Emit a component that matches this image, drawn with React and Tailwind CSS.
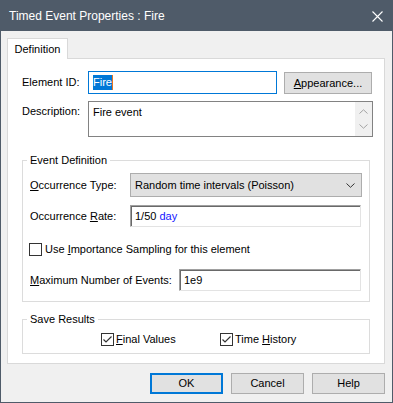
export default function App() {
  const sunken =
    "border border-[#e3e3e3] border-t-[#a0a0a0] border-l-[#a0a0a0] shadow-[inset_1px_1px_0_#696969] bg-white";
  return (
    <div className="w-[393px] h-[403px] flex flex-col border border-[#4f5b69] bg-[#f0f0f0] font-['Liberation_Sans',Arial,sans-serif] text-[11px] leading-[13px] text-black overflow-hidden">
      {/* Title bar */}
      <div className="h-[30px] shrink-0 bg-[#4f5b69] flex items-center justify-between pl-[8px] pr-[9px]">
        <span className="text-white text-[12px] leading-[14px]">Timed Event Properties : Fire</span>
        <svg width="11" height="11" viewBox="0 0 11 11" className="block">
          <path d="M0.5 0.5 L10.5 10.5 M10.5 0.5 L0.5 10.5" stroke="#ffffff" strokeWidth="1.1" fill="none" />
        </svg>
      </div>

      {/* Body */}
      <div className="flex-1 flex flex-col pt-[7px] pl-[6px]">
        {/* Tab */}
        <div className="relative z-10 -mb-px w-[61px] h-[21px] border border-b-0 border-[#d9d9d9] bg-white flex items-center justify-center">
          <span>Definition</span>
        </div>
        {/* Panel */}
        <div className="w-[378px] h-[306px] border border-[#d9d9d9] bg-white flex flex-col pt-[12px] pl-[14px]">
          {/* Element ID row */}
          <div className="flex items-start">
            <div className="w-[66px] h-[23px] flex items-center">Element ID:</div>
            <div className="w-[189px] h-[23px] border border-[#0078d7] bg-white flex items-center pl-[4px]">
              <span className="bg-[#0078d7] text-white leading-[15px]">Fire</span>
              <span className="w-px h-[15px] bg-[#e8741c]"></span>
            </div>
            <div className="ml-[7px] mt-px w-[88px] h-[22px] border border-[#adadad] bg-[#e1e1e1] flex items-center justify-center">
              <span>
                <span className="underline">A</span>ppearance...
              </span>
            </div>
          </div>
          {/* Description row */}
          <div className="flex items-start mt-[7px]">
            <div className="w-[66px] pt-[4px]">Description:</div>
            <div className="w-[285px] h-[36px] border border-[#828282] bg-white flex">
              <div className="flex-1 pl-[4px] pt-[4px]">Fire event</div>
              <div className="w-[17px] bg-[#f0f0f0] flex flex-col items-center justify-between py-[7px]">
                <svg width="9" height="5" viewBox="0 0 9 5" className="block">
                  <path d="M0.5 4.5 L4.5 0.8 L8.5 4.5" stroke="#a3a3a3" strokeWidth="1" fill="none" />
                </svg>
                <svg width="9" height="5" viewBox="0 0 9 5" className="block">
                  <path d="M0.5 0.5 L4.5 4.2 L8.5 0.5" stroke="#a3a3a3" strokeWidth="1" fill="none" />
                </svg>
              </div>
            </div>
          </div>

          {/* Event Definition group */}
          <fieldset className="mt-[17px] w-[348px] border border-[#dcdcdc]">
            <legend className="ml-[4px] px-[3px]">Event Definition</legend>
            <div className="pl-[7px] pt-[6px] pb-[10px]">
              <div className="flex items-center">
                <div className="w-[100px]">
                  <span className="underline">O</span>ccurrence Type:
                </div>
                <div className="w-[232px] h-[24px] border border-[#adadad] bg-[#e1e1e1] flex items-center justify-between pl-[4px] pr-[6px]">
                  <span>Random time intervals (Poisson)</span>
                  <svg width="9" height="5" viewBox="0 0 9 5" className="block">
                    <path d="M0.5 0.5 L4.5 4.3 L8.5 0.5" stroke="#333333" strokeWidth="1" fill="none" />
                  </svg>
                </div>
              </div>
              <div className="flex items-center mt-[8px]">
                <div className="w-[100px]">
                  Occurrence <span className="underline">R</span>ate:
                </div>
                <div className={`w-[231px] h-[22px] ${sunken} flex items-center pl-[4px]`}>
                  <span>1/50 </span>
                  <span className="text-[#1515ff] ml-[3px]">day</span>
                </div>
              </div>
              <div className="flex items-center mt-[16px] -ml-px">
                <div className="w-[13px] h-[13px] border border-[#333333] bg-white"></div>
                <span className="ml-[3px]">
                  Use <span className="underline">I</span>mportance Sampling for this element
                </span>
              </div>
              <div className="flex items-center mt-[13px]">
                <div className="w-[149px]">
                  <span className="underline">M</span>aximum Number of Events:
                </div>
                <div className={`w-[182px] h-[22px] ${sunken} flex items-center pl-[4px]`}>
                  <span>1e9</span>
                </div>
              </div>
            </div>
          </fieldset>

          {/* Save Results group */}
          <fieldset className="mt-[11px] w-[348px] border border-[#dcdcdc]">
            <legend className="ml-[4px] px-[3px]">Save Results</legend>
            <div className="flex items-center pl-[78px] pt-[7px] pb-[7px]">
              <div className="flex items-center w-[119px]">
                <Check />
                <span className="ml-[2px]">
                  <span className="underline">F</span>inal Values
                </span>
              </div>
              <div className="flex items-center">
                <Check />
                <span className="ml-[2px]">
                  Time <span className="underline">H</span>istory
                </span>
              </div>
            </div>
          </fieldset>
        </div>

        {/* Buttons */}
        <div className="w-[378px] flex justify-end gap-[8px] mt-[9px]">
          <div className="w-[73px] h-[21px] border-2 border-[#0078d7] bg-[#e1e1e1] flex items-center justify-center">OK</div>
          <div className="w-[73px] h-[21px] border border-[#adadad] bg-[#e1e1e1] flex items-center justify-center">Cancel</div>
          <div className="w-[73px] h-[21px] border border-[#adadad] bg-[#e1e1e1] flex items-center justify-center">Help</div>
        </div>
      </div>
    </div>
  );
}

function Check() {
  return (
    <div className="w-[13px] h-[13px] border border-[#333333] bg-white flex items-center justify-center">
      <svg width="11" height="11" viewBox="0 0 11 11" className="block">
        <path d="M1.5 5.5 L4 8 L9.5 2.5" stroke="#333333" strokeWidth="1.2" fill="none" />
      </svg>
    </div>
  );
}
